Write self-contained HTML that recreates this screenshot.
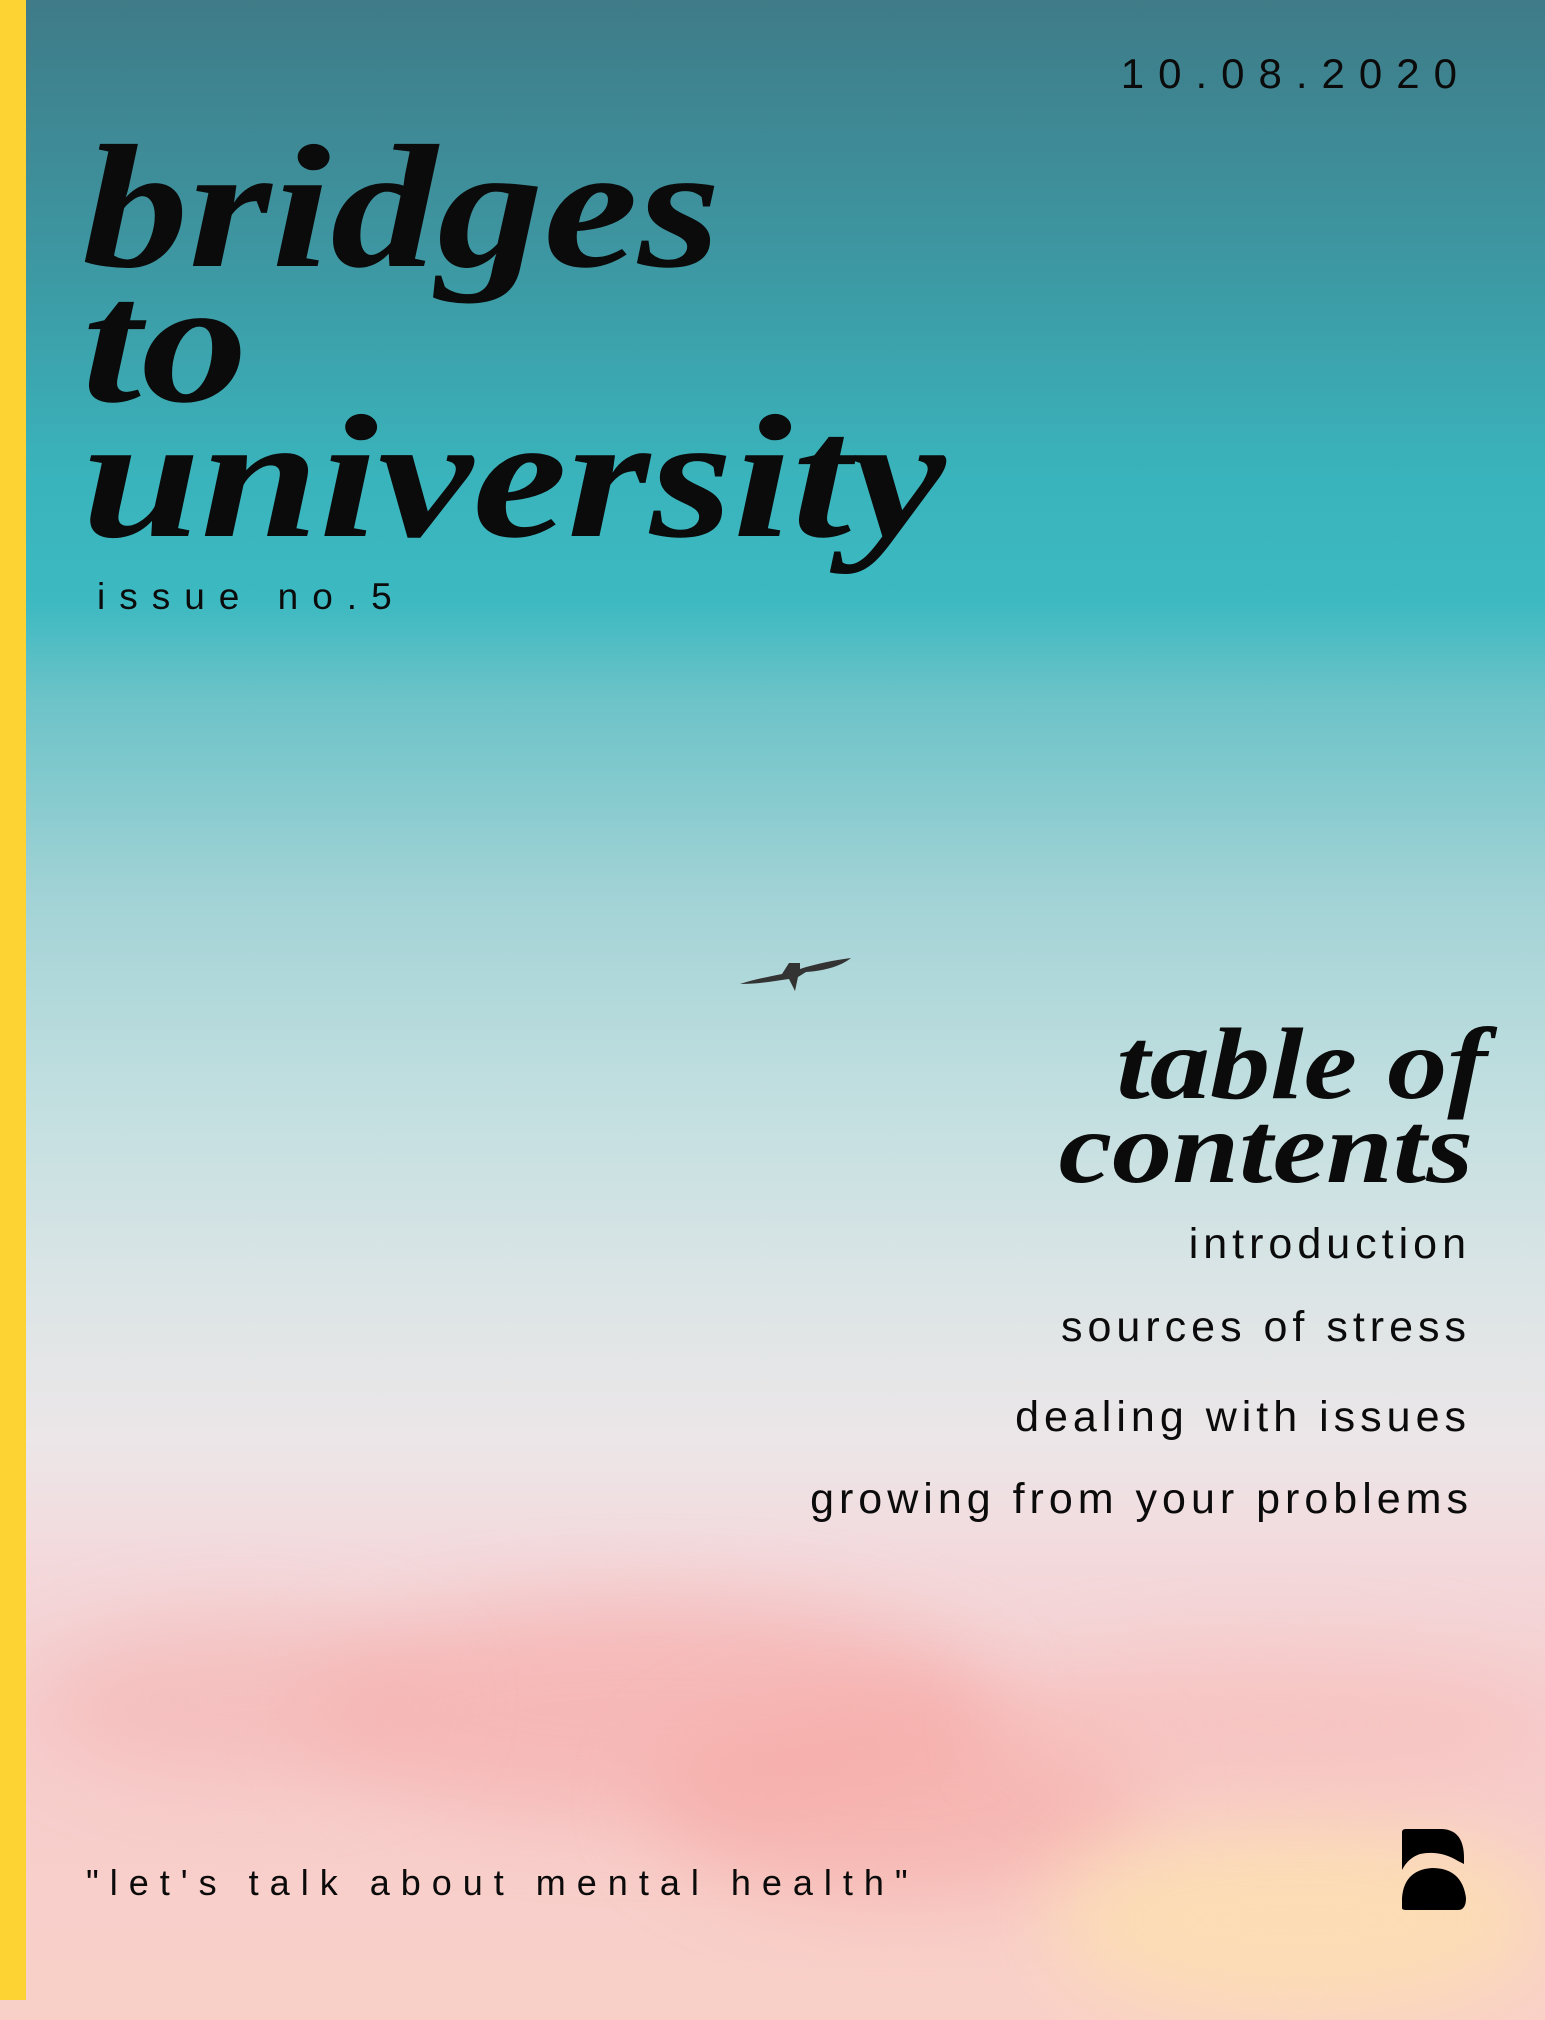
<!DOCTYPE html>
<html><head><meta charset="utf-8"><style>
html,body{margin:0;padding:0;background:#f9d0c8}
body{width:1545px;height:2000px;position:relative;overflow:hidden;font-family:"Liberation Sans",sans-serif}
.bg{position:absolute;left:0;top:0;width:1545px;height:2000px;
background:linear-gradient(180deg,#3f7b88 0%,#3d95a0 12%,#3ab4bc 24%,#3cb9c1 30%,#6cc3c8 35%,#a3d3d6 45%,#c2dfe0 55%,#dde5e6 65%,#ece6e8 72%,#f3d9dc 78%,#f6cdcd 86%,#f9d0c8 100%)}
.cloud{position:absolute;border-radius:50%;filter:blur(40px)}
.bar{position:absolute;left:0;top:0;width:26px;height:2000px;background:#fdd233}
.t{position:absolute;color:#0b0b0b;white-space:nowrap}
.serif{font-family:"Liberation Serif",serif;font-weight:bold;font-style:italic}
</style></head><body>
<div class="bg"></div>
<div class="cloud" style="left:300px;top:1600px;width:700px;height:220px;background:#f6b0ae;opacity:.7"></div>
<div class="cloud" style="left:40px;top:1620px;width:400px;height:160px;background:#f4b6b4;opacity:.6"></div>
<div class="cloud" style="left:650px;top:1700px;width:500px;height:200px;background:#f6a9a4;opacity:.6"></div>
<div class="cloud" style="left:1050px;top:1820px;width:500px;height:200px;background:#fde0b0;opacity:.8"></div>
<div class="cloud" style="left:1000px;top:1650px;width:550px;height:150px;background:#f7c0bc;opacity:.6"></div>
<div class="bar"></div>
<div class="t" style="right:74px;top:50px;font-size:42px;letter-spacing:14px">10.08.2020</div>
<div class="t serif" style="left:82px;top:140px;font-size:176px;line-height:135px;transform:scaleX(1.21);transform-origin:0 0">bridges<br>to<br>university</div>
<div class="t" style="left:97px;top:576px;font-size:37px;letter-spacing:14px">issue no.5</div>
<div class="t serif" style="right:58px;top:1023px;font-size:102px;line-height:84px;text-align:right;transform:scaleX(1.18);transform-origin:100% 0">table of<br><span style="margin-right:12px">contents</span></div>
<div class="t" style="right:74px;top:1220px;font-size:43px;letter-spacing:5px">introduction</div>
<div class="t" style="right:74px;top:1303px;font-size:43px;letter-spacing:5px">sources of stress</div>
<div class="t" style="right:74px;top:1393px;font-size:43px;letter-spacing:5px">dealing with issues</div>
<div class="t" style="right:72px;top:1475px;font-size:43px;letter-spacing:5px">growing from your problems</div>
<div class="t" style="left:86px;top:1862px;font-size:36px;letter-spacing:11px">"let's talk about mental health"</div>
<svg style="position:absolute;left:740px;top:955px" width="115" height="42" viewBox="0 0 115 42">
<path d="M0 29 C15 24 28 22 42 19 L49 8 L60 8 L60 14 C75 9 95 5 111 3 C100 12 82 16 66 17 L58 22 L55 36 L49 24 C35 26 18 29 0 29 Z" fill="#333"/>
</svg>
<svg style="position:absolute;left:1400px;top:1828px" width="68" height="84" viewBox="0 0 68 84">
<path d="M2 4 Q2 1 6 1 L42 1 Q64 2 64 30 L64 36 L58 33 Q40 22 20 26 Q8 30 2 42 Z" fill="#000"/>
<path d="M2 80 L2 70 Q4 42 32 40 Q62 40 66 70 Q66 82 58 82 L6 82 Q2 82 2 80 Z" fill="#000"/>
</svg>
</body></html>
